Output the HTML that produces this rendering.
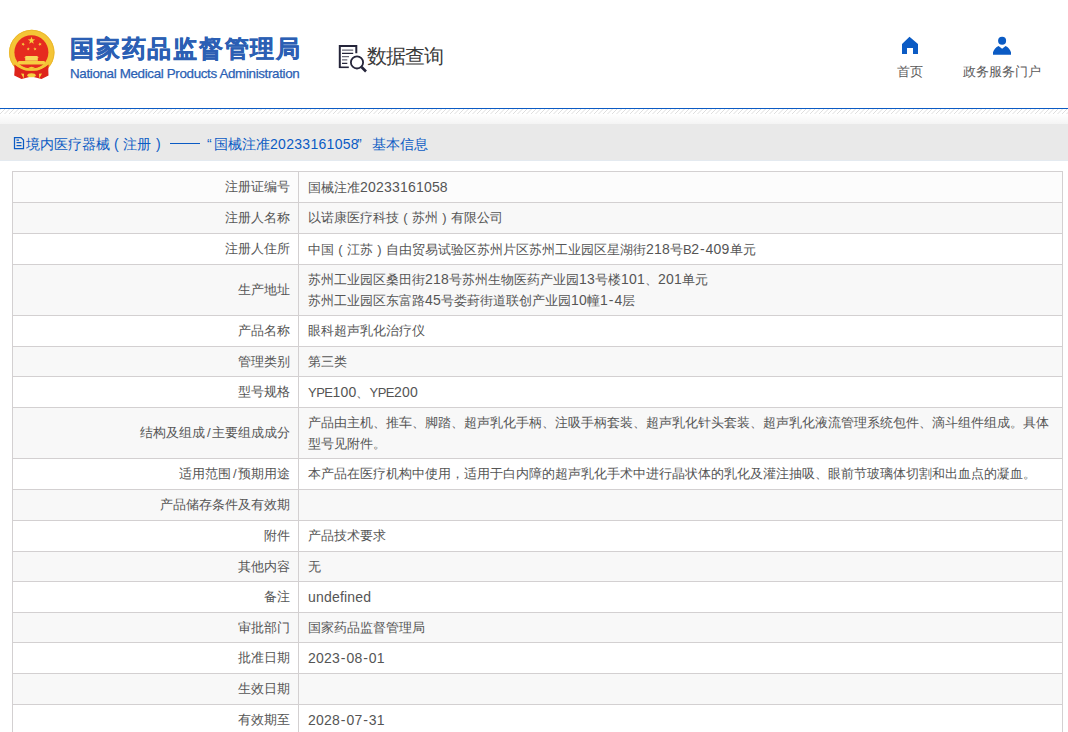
<!DOCTYPE html>
<html><head><meta charset="utf-8">
<style>
html,body{margin:0;padding:0;background:#fff;}
body{width:1068px;height:732px;overflow:hidden;position:relative;font-family:"Liberation Sans",sans-serif;}
.abs{position:absolute;}
#emblem{left:0;top:0;width:64px;height:90px;}
#t1{left:70px;top:33px;font-size:24px;font-weight:900;color:#2b5fb4;letter-spacing:1.75px;line-height:32px;white-space:nowrap;-webkit-text-stroke:.4px #2b5fb4;}
#t2{left:70px;top:66px;font-size:13.4px;letter-spacing:-.35px;color:#2b5fb4;-webkit-text-stroke:.25px #2b5fb4;line-height:16px;white-space:nowrap;}
#sq-ico{left:0;top:0;width:400px;height:90px;}
#sq-txt{left:367px;top:43px;font-size:20px;color:#3a3a3a;line-height:26px;white-space:nowrap;letter-spacing:-1px;}
.nav{position:absolute;top:36px;text-align:center;font-size:13px;color:#5a5a5a;line-height:16px;white-space:nowrap;}
#nav1{left:890px;width:40px;}
#nav2{left:958px;width:88px;}
.nav svg{display:block;margin:0 auto 10px auto;}
#bline{left:0;top:108px;width:1068px;height:1px;background:#0b5bc4;}
#hatch{left:0;top:109px;width:1068px;height:5px;}
#grad{left:0;top:114px;width:1068px;height:10px;background:linear-gradient(#fff,#f4f4f4);}
#bar{left:0;top:124px;width:1068px;height:36px;background:#e9e9e9;border-bottom:1px solid #e4eaf0;}
.bc{position:absolute;top:133.5px;font-size:14px;color:#0b5bc4;line-height:20px;white-space:nowrap;}
.r{position:absolute;left:12px;width:1050px;box-sizing:border-box;border:1px solid #d3d0d1;border-right:0;background:#fff;}
.r.g{background:#f8f8f8;}
.r.g1{background:#fcfcfc;}
#vline{position:absolute;left:298px;top:171px;width:1px;height:561px;background:#d3d0d1;}
#rline{position:absolute;left:1062px;top:171px;width:1px;height:561px;background:#d3d0d1;}
.k{position:absolute;left:12px;width:278px;text-align:right;font-size:13px;line-height:20px;color:#555;white-space:nowrap;}
.v{position:absolute;left:308px;font-size:13px;line-height:20px;color:#555;white-space:nowrap;}
.n{font-size:14px;letter-spacing:.2px;}
.s{margin:0 1.5px;}
.p{display:inline-block;width:13px;text-align:center;font-size:13px;}
.u{font-size:13px;letter-spacing:-.5px;}
.h{font-size:14px;margin:0 .9px;}
</style></head><body>
<svg id="emblem" class="abs" viewBox="0 0 64 90">
  <circle cx="31.75" cy="52.5" r="22.75" fill="#f4c536"/>
  <circle cx="31.75" cy="52.5" r="22.2" fill="none" stroke="#eab62c" stroke-width=".9"/>
  <circle cx="31.4" cy="52.2" r="17" fill="#e62b1f"/>
  <path d="M31.50,36.70 L32.42,39.34 L35.21,39.39 L32.98,41.08 L33.79,43.76 L31.50,42.16 L29.21,43.76 L30.02,41.08 L27.79,39.39 L30.58,39.34Z M23.75,42.41 L23.73,43.78 L25.00,44.27 L23.70,44.67 L23.62,46.03 L22.84,44.91 L21.52,45.26 L22.34,44.17 L21.60,43.03 L22.89,43.47Z M39.35,42.41 L40.21,43.47 L41.50,43.03 L40.76,44.17 L41.58,45.26 L40.26,44.91 L39.48,46.03 L39.40,44.67 L38.10,44.27 L39.37,43.78Z M28.61,47.23 L28.82,48.50 L30.08,48.75 L28.94,49.34 L29.09,50.62 L28.17,49.71 L27.01,50.25 L27.59,49.10 L26.71,48.15 L27.98,48.35Z M34.69,47.23 L35.32,48.35 L36.59,48.15 L35.71,49.10 L36.29,50.25 L35.13,49.71 L34.21,50.62 L34.36,49.34 L33.22,48.75 L34.48,48.50Z" fill="#f6cf3e"/>
  <path d="M25.2 60.7 V57.6 H24 L26 56 V55.9 H37 L39 57.6 H37.8 V60.7 Z" fill="#f8d75a"/>
  <path d="M17.9 64.4 V61.8 L19 60.9 H44 L45.1 61.8 V64.4 Z" fill="#f6cd42"/>
  <path d="M14.3 64.5 Q15 70 14.2 75.5 L21.5 79 L31.5 76.5 L41.5 79 L48.5 75.5 Q48 70 48.7 64.5 Q40 71 31.5 70.5 Q23 71 14.3 64.5 Z" fill="#de241b"/>
  <path d="M15.5 63 Q23 70.5 31.5 69.3 Q40 70.5 47.5 63" fill="none" stroke="#f4c536" stroke-width="2.6"/>
  <path d="M27.5 68.5 Q31.5 64.8 35.8 68.5 Z" fill="#f4c536"/>
  <path d="M21 73.5 L24 73.8 L23.8 78.6 Z M42 73.5 L39 73.8 L39.2 78.6 Z" fill="#f4d040"/>
  <ellipse cx="31.5" cy="75.2" rx="4.2" ry="2" fill="#f4d040"/>
</svg>
<div id="t1" class="abs">国家药品监督管理局</div>
<div id="t2" class="abs">National Medical Products Administration</div>
<svg id="sq-ico" class="abs" viewBox="0 0 400 90">
  <g fill="none" stroke="#25253a">
    <path d="M339.8 68 V46 H356.3 V53.3" stroke-width="2"/>
    <path d="M339 67.3 H348.8" stroke-width="1.6"/>
    <circle cx="357" cy="62.4" r="6.1" stroke-width="1.8"/>
    <path d="M361.5 67 L366 71.5" stroke-width="2.6"/>
    <path d="M342 50.1 H353.2 M342 56.7 H349 M342 59.9 H347.3" stroke="#6a6a78" stroke-width="1.3"/>
    <path d="M342 53.3 H353.2 M342 63.4 H347.3" stroke-width="1.3"/>
  </g>
</svg>
<div id="sq-txt" class="abs">数据查询</div>
<svg class="abs" style="left:0;top:0" width="1068" height="90" viewBox="0 0 1068 90">
  <path d="M909.5 36.8 L918 44 V54 H913 V48 H907 V54 H902 V44 Z" fill="#0b5bc4"/>
  <circle cx="1002.1" cy="40.8" r="4" fill="#0b5bc4"/>
  <path d="M993 54.7 V52.3 Q994.5 47.8 998.6 46 L1002.1 48.8 L1005.6 46 Q1009.5 47.8 1011 52.3 V54.7 Z" fill="#0b5bc4"/>
</svg>
<div class="nav" style="left:890px;width:40px;top:64px">首页</div>
<div class="nav" style="left:958px;width:88px;top:64px">政务服务门户</div>
<div id="bline" class="abs"></div>
<svg id="hatch" class="abs" width="1068" height="5"><defs><pattern id="hp" width="9" height="5" patternUnits="userSpaceOnUse"><path d="M0 5 L5 0 M4.5 5 L9.5 0 M-4.5 5 L0.5 0" stroke="#dedede" stroke-width="1"/></pattern></defs><rect width="1068" height="5" fill="url(#hp)"/></svg>
<div id="grad" class="abs"></div>
<div id="bar" class="abs"></div>
<svg class="abs" style="left:13px;top:136px" width="12" height="14" viewBox="0 0 12 14"><path d="M1.5 1.5 H8 L10.5 4 V12.5 H1.5 Z M3.5 6.5 H8.5 M3.5 9.5 H8.5 M3.5 4 H6" fill="none" stroke="#0b5bc4" stroke-width="1.25"/></svg>
<div class="bc" style="left:26px">境内医疗器械</div>
<div class="bc" style="left:114px">(</div>
<div class="bc" style="left:123px">注册</div>
<div class="bc" style="left:156px">)</div>
<div class="abs" style="left:170px;top:143px;width:30px;height:1.3px;background:#0b5bc4"></div>
<div class="bc" style="left:207px">“</div>
<div class="bc" style="left:214px">国械注准<span style="letter-spacing:.3px">20233161058</span></div>
<div class="bc" style="left:357px">”</div>
<div class="bc" style="left:372px">基本信息</div>
<div class="r g1" style="top:171px;height:32px"></div>
<div class="k" style="top:177.0px">注册证编号</div>
<div class="v" style="top:177.0px">国械注准<span class="n">20233161058</span></div>
<div class="r g" style="top:202px;height:32px"></div>
<div class="k" style="top:208.0px">注册人名称</div>
<div class="v" style="top:208.0px">以诺康医疗科技<span class="p">(</span>苏州<span class="p">)</span>有限公司</div>
<div class="r" style="top:233px;height:32px"></div>
<div class="k" style="top:239.0px">注册人住所</div>
<div class="v" style="top:239.0px">中国<span class="p">(</span>江苏<span class="p">)</span>自由贸易试验区苏州片区苏州工业园区星湖街<span class="n">218</span>号<span class="u">B</span><span class="n">2</span><span class="h">-</span><span class="n">409</span>单元</div>
<div class="r g" style="top:264px;height:52px"></div>
<div class="k" style="top:280.0px">生产地址</div>
<div class="v" style="top:268.5px;line-height:21px">苏州工业园区桑田街<span class="n">218</span>号苏州生物医药产业园<span class="n">13</span>号楼<span class="n">101</span>、<span class="n">201</span>单元<br>苏州工业园区东富路<span class="n">45</span>号娄葑街道联创产业园<span class="n">10</span>幢<span class="n">1</span><span class="h">-</span><span class="n">4</span>层</div>
<div class="r" style="top:315px;height:32px"></div>
<div class="k" style="top:321.0px">产品名称</div>
<div class="v" style="top:321.0px">眼科超声乳化治疗仪</div>
<div class="r g" style="top:346px;height:31px"></div>
<div class="k" style="top:351.5px">管理类别</div>
<div class="v" style="top:351.5px">第三类</div>
<div class="r" style="top:376px;height:32px"></div>
<div class="k" style="top:382.0px">型号规格</div>
<div class="v" style="top:382.0px"><span class="u">YPE</span><span class="n">100</span>、<span class="u">YPE</span><span class="n">200</span></div>
<div class="r g" style="top:407px;height:52px"></div>
<div class="k" style="top:423.0px">结构及组成<span class="s">/</span>主要组成成分</div>
<div class="v" style="top:411.5px;line-height:21px">产品由主机、推车、脚踏、超声乳化手柄、注吸手柄套装、超声乳化针头套装、超声乳化液流管理系统包件、滴斗组件组成。具体<br>型号见附件。</div>
<div class="r" style="top:458px;height:32px"></div>
<div class="k" style="top:464.0px">适用范围<span class="s">/</span>预期用途</div>
<div class="v" style="top:464.0px">本产品在医疗机构中使用，适用于白内障的超声乳化手术中进行晶状体的乳化及灌注抽吸、眼前节玻璃体切割和出血点的凝血。</div>
<div class="r g" style="top:489px;height:32px"></div>
<div class="k" style="top:495.0px">产品储存条件及有效期</div>
<div class="r" style="top:520px;height:32px"></div>
<div class="k" style="top:526.0px">附件</div>
<div class="v" style="top:526.0px">产品技术要求</div>
<div class="r g" style="top:551px;height:31px"></div>
<div class="k" style="top:556.5px">其他内容</div>
<div class="v" style="top:556.5px">无</div>
<div class="r" style="top:581px;height:32px"></div>
<div class="k" style="top:587.0px">备注</div>
<div class="v" style="top:587.0px"><span class="n">undefined</span></div>
<div class="r g" style="top:612px;height:31px"></div>
<div class="k" style="top:617.5px">审批部门</div>
<div class="v" style="top:617.5px">国家药品监督管理局</div>
<div class="r" style="top:642px;height:32px"></div>
<div class="k" style="top:648.0px">批准日期</div>
<div class="v" style="top:648.0px"><span class="n">2023</span><span class="h">-</span><span class="n">08</span><span class="h">-</span><span class="n">01</span></div>
<div class="r g" style="top:673px;height:32px"></div>
<div class="k" style="top:679.0px">生效日期</div>
<div class="r" style="top:704px;height:32px"></div>
<div class="k" style="top:710.0px">有效期至</div>
<div class="v" style="top:710.0px"><span class="n">2028</span><span class="h">-</span><span class="n">07</span><span class="h">-</span><span class="n">31</span></div><div id="vline"></div><div id="rline"></div>
</body></html>
